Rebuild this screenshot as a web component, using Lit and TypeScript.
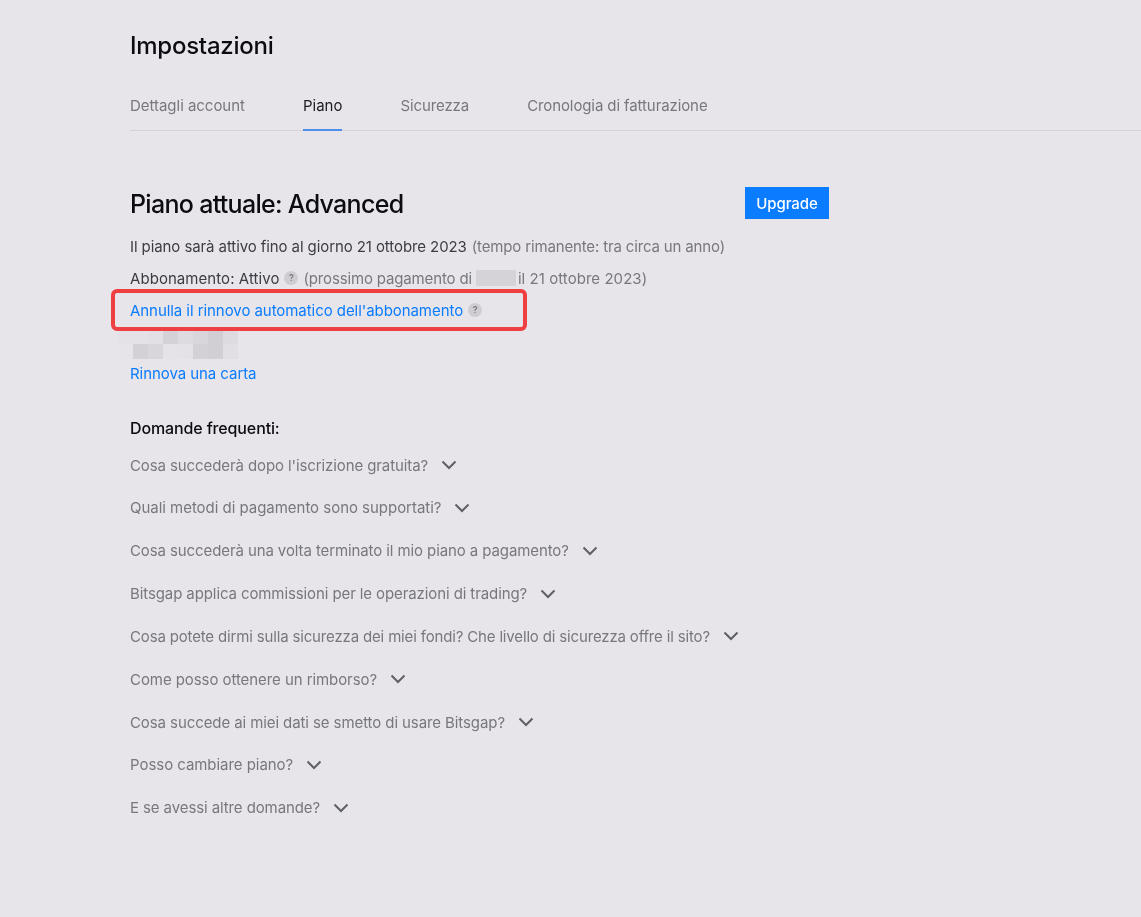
import { LitElement, html, css } from 'lit'
import { customElement } from 'lit/decorators.js'

// tracking is per row, the reference text was set by a different rasteriser
const FAQ = [
  { q: "Cosa succederà dopo l'iscrizione gratuita?", ls: -0.1 },
  { q: 'Quali metodi di pagamento sono supportati?', ls: -0.03 },
  { q: 'Cosa succederà una volta terminato il mio piano a pagamento?', ls: -0.1 },
  { q: 'Bitsgap applica commissioni per le operazioni di trading?', ls: -0.1 },
  { q: 'Cosa potete dirmi sulla sicurezza dei miei fondi? Che livello di sicurezza offre il sito?', ls: -0.16 },
  { q: 'Come posso ottenere un rimborso?', ls: -0.07 },
  { q: 'Cosa succede ai miei dati se smetto di usare Bitsgap?', ls: -0.09 },
  { q: 'Posso cambiare piano?', ls: -0.05 },
  { q: 'E se avessi altre domande?', ls: -0.1 }
]

const TABS = ['Dettagli account', 'Piano', 'Sicurezza', 'Cronologia di fatturazione']

// mosaic that hides the card number, one value per 15px cell
const MOSAIC = [
  ['#e4e2e7', '#e4e2e7', '#e2e0e5', '#d4d2d7', '#dddbe0', '#d8d6db', '#d1cfd4', '#dddbe0'],
  ['#e6e4e9', '#d3d1d6', '#d8d6db', '#e5e3e8', '#e4e2e7', '#d3d1d6', '#d1cfd4', '#e1dfe4']
]

@customElement('app-root')
export class AppRoot extends LitElement {
  static styles = css`
  :host {
    display: block;
    min-height: 917px;
    background: #e7e5ea;
    font-family: Inter, 'Liberation Sans', sans-serif;
    font-size: 15px;
    color: #3c3c44;
    overflow: hidden;
  }

  .page {
    padding: 29px 0 0 130px;
    filter: blur(0.5px);
  }

  h1 {
    margin: 0;
    font-size: 24px;
    line-height: 34px;
    font-weight: 500;
    letter-spacing: -0.25px;
    color: #0c0c10;
  }

  .tabs {
    display: flex;
    gap: 58px;
    margin-top: 31px;
    border-bottom: 1px solid #d4d3d8;
  }

  .tab {
    height: 36px;
    padding-top: 1px;
    box-sizing: border-box;
    line-height: 22px;
    color: #77777d;
    letter-spacing: -0.1px;
    margin-bottom: -1px;
  }

  .tab:first-child {
    letter-spacing: -0.03px;
  }

  .tab.active {
    color: #1c1c20;
    border-bottom: 2px solid #4d8fef;
    height: 37px;
    letter-spacing: 0;
  }

  .plan {
    width: 699px;
    margin-top: 55px;
    display: flex;
    justify-content: space-between;
    align-items: center;
  }

  h2 {
    margin: 2px 0 0;
    font-size: 25px;
    line-height: 32px;
    font-weight: 500;
    letter-spacing: -0.7px;
    color: #0c0c10;
  }

  .upgrade {
    width: 84px;
    height: 32px;
    border: none;
    padding: 0;
    background: #0a7cff;
    color: #fff;
    font: inherit;
    font-weight: 500;
    letter-spacing: -0.1px;
  }

  .lines {
    margin-top: 10px;
  }

  .line {
    height: 32px;
    display: flex;
    align-items: center;
    white-space: nowrap;
    letter-spacing: -0.09px;
    position: relative;
  }

  .status {
    letter-spacing: 0.06px;
  }

  .muted {
    color: #77777d;
    letter-spacing: -0.15px;
  }

  .muted.date {
    letter-spacing: 0.05px;
  }

  .help {
    width: 14px;
    height: 14px;
    border-radius: 50%;
    background: #cfcdd2;
    color: #77777d;
    font-size: 9px;
    font-weight: 600;
    line-height: 14px;
    text-align: center;
    letter-spacing: 0;
    flex: none;
  }

  .status + .help {
    margin: 0 5px 0 5px;
  }

  a + .help {
    margin-left: 5px;
  }

  .hidden-amount {
    width: 40px;
    height: 16px;
    background: #d5d3d8;
    margin: 0 2px 0 4px;
  }

  a {
    color: #0a7cff;
    text-decoration: none;
    letter-spacing: -0.06px;
  }

  .callout {
    position: absolute;
    left: -19px;
    top: -5px;
    width: 408px;
    height: 34px;
    border: 4px solid #ee3f43;
    border-radius: 6px;
  }

  .mosaic {
    display: grid;
    grid-template-columns: repeat(8, 15px);
    grid-auto-rows: 15px;
    margin: 3px 0 0 -12px;
    width: max-content;
  }

  .link-row {
    margin-top: -2px;
  }

  h3 {
    margin: 27px 0 0;
    font-size: 16px;
    line-height: 24px;
    font-weight: 500;
    letter-spacing: -0.13px;
    color: #0c0c10;
  }

  .faq {
    margin-top: 9px;
    display: flex;
    flex-direction: column;
    gap: 10.85px;
  }

  .q {
    height: 32px;
    display: flex;
    align-items: center;
    gap: 13px;
    color: #77777d;
    white-space: nowrap;
  }

  .q svg {
    flex: none;
  }
  `

  render () {
    return html`
    <div class="page">
      <h1>Impostazioni</h1>
      <div class="tabs">
        ${TABS.map(t => html`<div class="tab ${t === 'Piano' ? 'active' : ''}">${t}</div>`)}
      </div>

      <div class="plan">
        <h2>Piano attuale: Advanced</h2>
        <button class="upgrade">Upgrade</button>
      </div>

      <div class="lines">
        <div class="line">
          Il piano sarà attivo fino al giorno 21 ottobre 2023
          <span class="muted" style="margin-left:5px">(tempo rimanente: tra circa un anno)</span>
        </div>
        <div class="line">
          <span class="status">Abbonamento: Attivo</span>
          <span class="help">?</span>
          <span class="muted">(prossimo pagamento di</span>
          <span class="hidden-amount"></span>
          <span class="muted date">il 21 ottobre 2023)</span>
        </div>
        <div class="line">
          <a href="#">Annulla il rinnovo automatico dell'abbonamento</a>
          <span class="help">?</span>
          <span class="callout"></span>
        </div>
      </div>

      <div class="mosaic">
        ${MOSAIC.flat().map(c => html`<span style="background:${c}"></span>`)}
      </div>

      <div class="line link-row"><a href="#">Rinnova una carta</a></div>

      <h3>Domande frequenti:</h3>
      <div class="faq">
        ${FAQ.map(f => html`
        <div class="q" style="letter-spacing:${f.ls}px">
          ${f.q}
          <svg width="16" height="10" viewBox="0 0 16 10" fill="none">
            <path d="M1.5 1.5 8 8l6.5-6.5" stroke="#5f5f66" stroke-width="2"/>
          </svg>
        </div>`)}
      </div>
    </div>
    `
  }
}
